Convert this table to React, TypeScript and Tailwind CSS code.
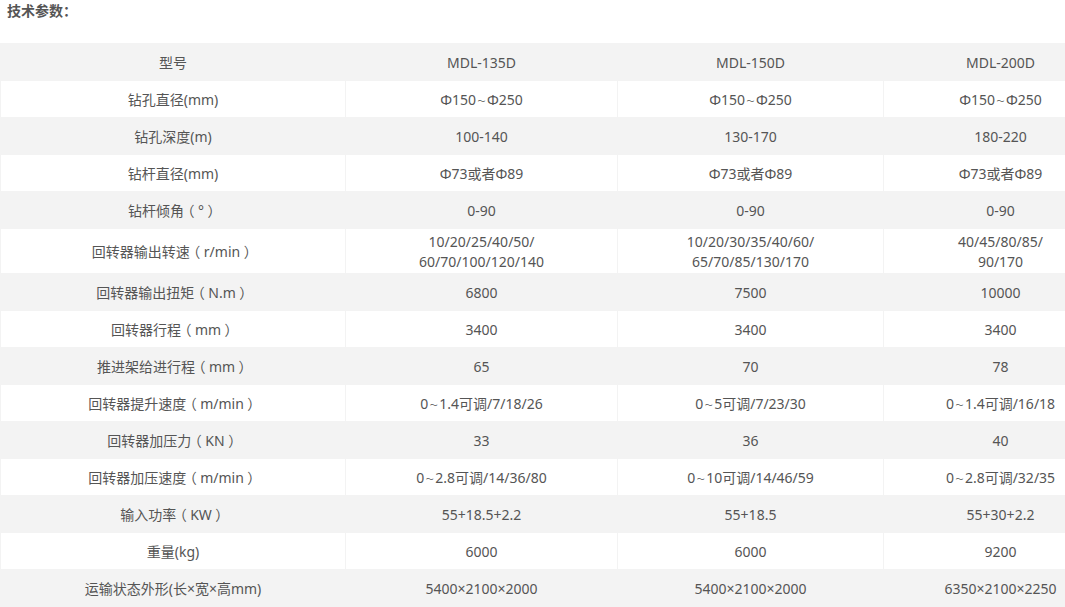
const MODELS = ["MDL-135D", "MDL-150D", "MDL-200D"];

const ROWS: { label: string; values: string[][] }[] = [
  { label: "钻孔直径(mm)", values: [["Φ150～Φ250"], ["Φ150～Φ250"], ["Φ150～Φ250"]] },
  { label: "钻孔深度(m)", values: [["100-140"], ["130-170"], ["180-220"]] },
  { label: "钻杆直径(mm)", values: [["Φ73或者Φ89"], ["Φ73或者Φ89"], ["Φ73或者Φ89"]] },
  { label: "钻杆倾角（°）", values: [["0-90"], ["0-90"], ["0-90"]] },
  {
    label: "回转器输出转速（r/min）",
    values: [
      ["10/20/25/40/50/", "60/70/100/120/140"],
      ["10/20/30/35/40/60/", "65/70/85/130/170"],
      ["40/45/80/85/", "90/170"],
    ],
  },
  { label: "回转器输出扭矩（N.m）", values: [["6800"], ["7500"], ["10000"]] },
  { label: "回转器行程（mm）", values: [["3400"], ["3400"], ["3400"]] },
  { label: "推进架给进行程（mm）", values: [["65"], ["70"], ["78"]] },
  { label: "回转器提升速度（m/min）", values: [["0～1.4可调/7/18/26"], ["0～5可调/7/23/30"], ["0～1.4可调/16/18"]] },
  { label: "回转器加压力（KN）", values: [["33"], ["36"], ["40"]] },
  { label: "回转器加压速度（m/min）", values: [["0～2.8可调/14/36/80"], ["0～10可调/14/46/59"], ["0～2.8可调/32/35"]] },
  { label: "输入功率（KW）", values: [["55+18.5+2.2"], ["55+18.5"], ["55+30+2.2"]] },
  { label: "重量(kg)", values: [["6000"], ["6000"], ["9200"]] },
  { label: "运输状态外形(长×宽×高mm)", values: [["5400×2100×2000"], ["5400×2100×2000"], ["6350×2100×2250"]] },
];

const cell = "h-[37px] border border-[#f3f3f3] px-1 pt-[3px] pb-[1px] text-center align-middle leading-[20px]";

// full-width brackets and tilde sit centred in their box, like YaHei draws them
function Txt({ text }: { text: string }) {
  const parts = text.split(/([（）～])/);
  return (
    <>
      {parts.map((p, i) =>
        p === "（" || p === "）" ? (
          <span key={i} className="inline-block w-[14px] text-center [font-feature-settings:'halt']">
            {p}
          </span>
        ) : p === "～" ? (
          <span key={i} className="inline-block w-[11px] text-center align-[1px] text-[8px]">
            ～
          </span>
        ) : (
          <span key={i}>{p}</span>
        )
      )}
    </>
  );
}

export default function App() {
  return (
    <div
      className="h-[607px] w-[1065px] overflow-hidden bg-white text-[14px] text-[#555]"
      style={{ fontFamily: '"Noto Sans", "Noto Sans CJK SC", sans-serif' }}
    >
      <div className="h-[43px] pl-[7px] font-bold leading-[22px]">技术参数：</div>

      <table className="w-[1117px] table-fixed border-collapse">
        <colgroup>
          <col className="w-[345px]" />
          <col className="w-[272px]" />
          <col className="w-[266px]" />
          <col className="w-[234px]" />
        </colgroup>
        <tbody>
          <tr className="bg-[#f3f3f3]">
            <td className={cell}>型号</td>
            {MODELS.map((m) => (
              <td key={m} className={cell}>{m}</td>
            ))}
          </tr>
          {ROWS.map((row, i) => (
            <tr key={row.label} className={i % 2 === 0 ? "bg-white" : "bg-[#f3f3f3]"}>
              <td className={cell}>
                <Txt text={row.label} />
              </td>
              {row.values.map((lines, j) => (
                <td key={j} className={cell}>
                  {lines.map((l) => (
                    <div key={l}>
                      <Txt text={l} />
                    </div>
                  ))}
                </td>
              ))}
            </tr>
          ))}
        </tbody>
      </table>
    </div>
  );
}
